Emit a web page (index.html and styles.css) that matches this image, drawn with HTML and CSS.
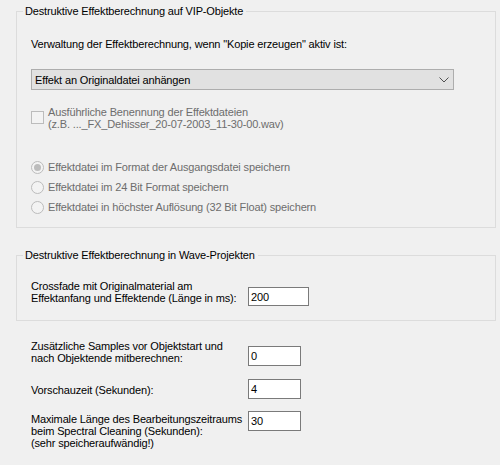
FILE: index.html
```html
<!DOCTYPE html>
<html lang="de">
<head>
<meta charset="utf-8">
<title>Effektberechnung</title>
<link rel="stylesheet" href="styles.css">
</head>
<body>
<div class="page">
  <fieldset class="group group-vip">
    <legend class="group-title">Destruktive Effektberechnung auf VIP-Objekte</legend>
    <div class="group-body">
      <div class="lead">Verwaltung der Effektberechnung, wenn "Kopie erzeugen" aktiv ist:</div>
      <div class="select">
        <span class="select-text">Effekt an Originaldatei anhängen</span>
        <svg class="chevron" width="10" height="6" viewBox="0 0 10 6"><path d="M0.5 0.5 L5 5 L9.5 0.5" fill="none" stroke="#505050" stroke-width="1"/></svg>
      </div>
      <div class="check disabled">
        <span class="check-box"></span>
        <span class="check-text">Ausführliche Benennung der Effektdateien<br>(z.B. ..._FX_Dehisser_20-07-2003_11-30-00.wav)</span>
      </div>
      <div class="radios disabled">
        <div class="radio checked"><span class="radio-circle"></span><span>Effektdatei im Format der Ausgangsdatei speichern</span></div>
        <div class="radio"><span class="radio-circle"></span><span>Effektdatei im 24 Bit Format speichern</span></div>
        <div class="radio"><span class="radio-circle"></span><span>Effektdatei in höchster Auflösung (32 Bit Float) speichern</span></div>
      </div>
    </div>
  </fieldset>

  <fieldset class="group group-wave">
    <legend class="group-title">Destruktive Effektberechnung in Wave-Projekten</legend>
    <div class="group-body">
      <div class="field field-crossfade">
        <span class="field-label">Crossfade mit Originalmaterial am<br>Effektanfang und Effektende (Länge in ms):</span>
        <span class="input input-wide">200</span>
      </div>
    </div>
  </fieldset>

  <div class="fields">
    <div class="field field-samples">
      <span class="field-label">Zusätzliche Samples vor Objektstart und<br>nach Objektende mitberechnen:</span>
      <span class="input">0</span>
    </div>
    <div class="field field-preview">
      <span class="field-label">Vorschauzeit (Sekunden):</span>
      <span class="input">4</span>
    </div>
    <div class="field field-max">
      <span class="field-label">Maximale Länge des Bearbeitungszeitraums<br>beim Spectral Cleaning (Sekunden):<br>(sehr speicheraufwändig!)</span>
      <span class="input">30</span>
    </div>
  </div>
</div>
</body>
</html>
```

FILE: styles.css
```css
html, body {
  margin: 0;
  padding: 0;
  background: #f0f0f0;
}

body {
  font-family: "Liberation Sans", Arial, sans-serif;
  font-size: 11px;
  line-height: 12px;
  letter-spacing: -0.15px;
  color: #000;
  width: 500px;
  height: 465px;
  overflow: hidden;
  white-space: nowrap;
}

.page {
  padding-top: 4px;
}

.group {
  margin: 0 0 0 16px;
  width: 480px;
  box-sizing: border-box;
  border: 1px solid #dcdcdc;
  padding: 0;
  min-width: 0;
}

.group-title {
  margin-left: 6px;
  padding: 0 3px 0 2px;
  line-height: 14px;
}

.group-body {
  padding-left: 14px;
}

.group-vip .group-body {
  padding-top: 20px;
  padding-bottom: 10px;
}

.lead {
  height: 12px;
}

.select {
  margin-top: 19px;
  width: 423px;
  height: 21px;
  box-sizing: border-box;
  border: 1px solid #adadad;
  background: #e1e1e1;
  display: flex;
  align-items: center;
  justify-content: space-between;
  padding: 0 4px 0 3px;
}

.chevron {
  display: block;
  margin-top: 1px;
}

.check {
  margin-top: 16px;
  display: flex;
  align-items: flex-start;
  gap: 4px;
}

.check-box {
  width: 13px;
  height: 13px;
  box-sizing: border-box;
  border: 1px solid #bcbcbc;
  background: #f3f3f3;
  margin-top: 5px;
  flex: none;
}

.disabled {
  color: #6d6d6d;
}

.radios {
  margin-top: 27px;
  display: flex;
  flex-direction: column;
}

.radio {
  height: 20px;
  display: flex;
  align-items: center;
  gap: 4px;
}

.radio-circle {
  width: 13px;
  height: 13px;
  box-sizing: border-box;
  border: 1px solid #bcbcbc;
  border-radius: 50%;
  background: #f3f3f3;
  flex: none;
  display: flex;
  align-items: center;
  justify-content: center;
}

.radio.checked .radio-circle::after {
  content: "";
  width: 7px;
  height: 7px;
  border-radius: 50%;
  background: #bcbcbc;
}

.group-wave {
  margin-top: 20px;
}

.group-wave .group-body {
  padding-top: 18px;
  padding-bottom: 14px;
}

.field {
  display: flex;
  align-items: flex-start;
}

.field-label {
  width: 217px;
  flex: none;
}

.input {
  box-sizing: border-box;
  width: 53px;
  height: 20px;
  border: 1px solid #7a7a7a;
  background: #fff;
  padding: 0 0 0 2px;
  display: flex;
  align-items: center;
}

.input-wide {
  width: 61px;
  height: 19px;
  margin-top: 7px;
}

.fields {
  padding-left: 31px;
}

.field-samples {
  margin-top: 19px;
}

.field-samples .input {
  margin-top: 6px;
}

.field-preview {
  margin-top: 13px;
}

.field-preview .field-label {
  margin-top: 5px;
}

.field-max {
  margin-top: 12px;
}

.field-max .field-label {
  margin-top: 2px;
}
```
